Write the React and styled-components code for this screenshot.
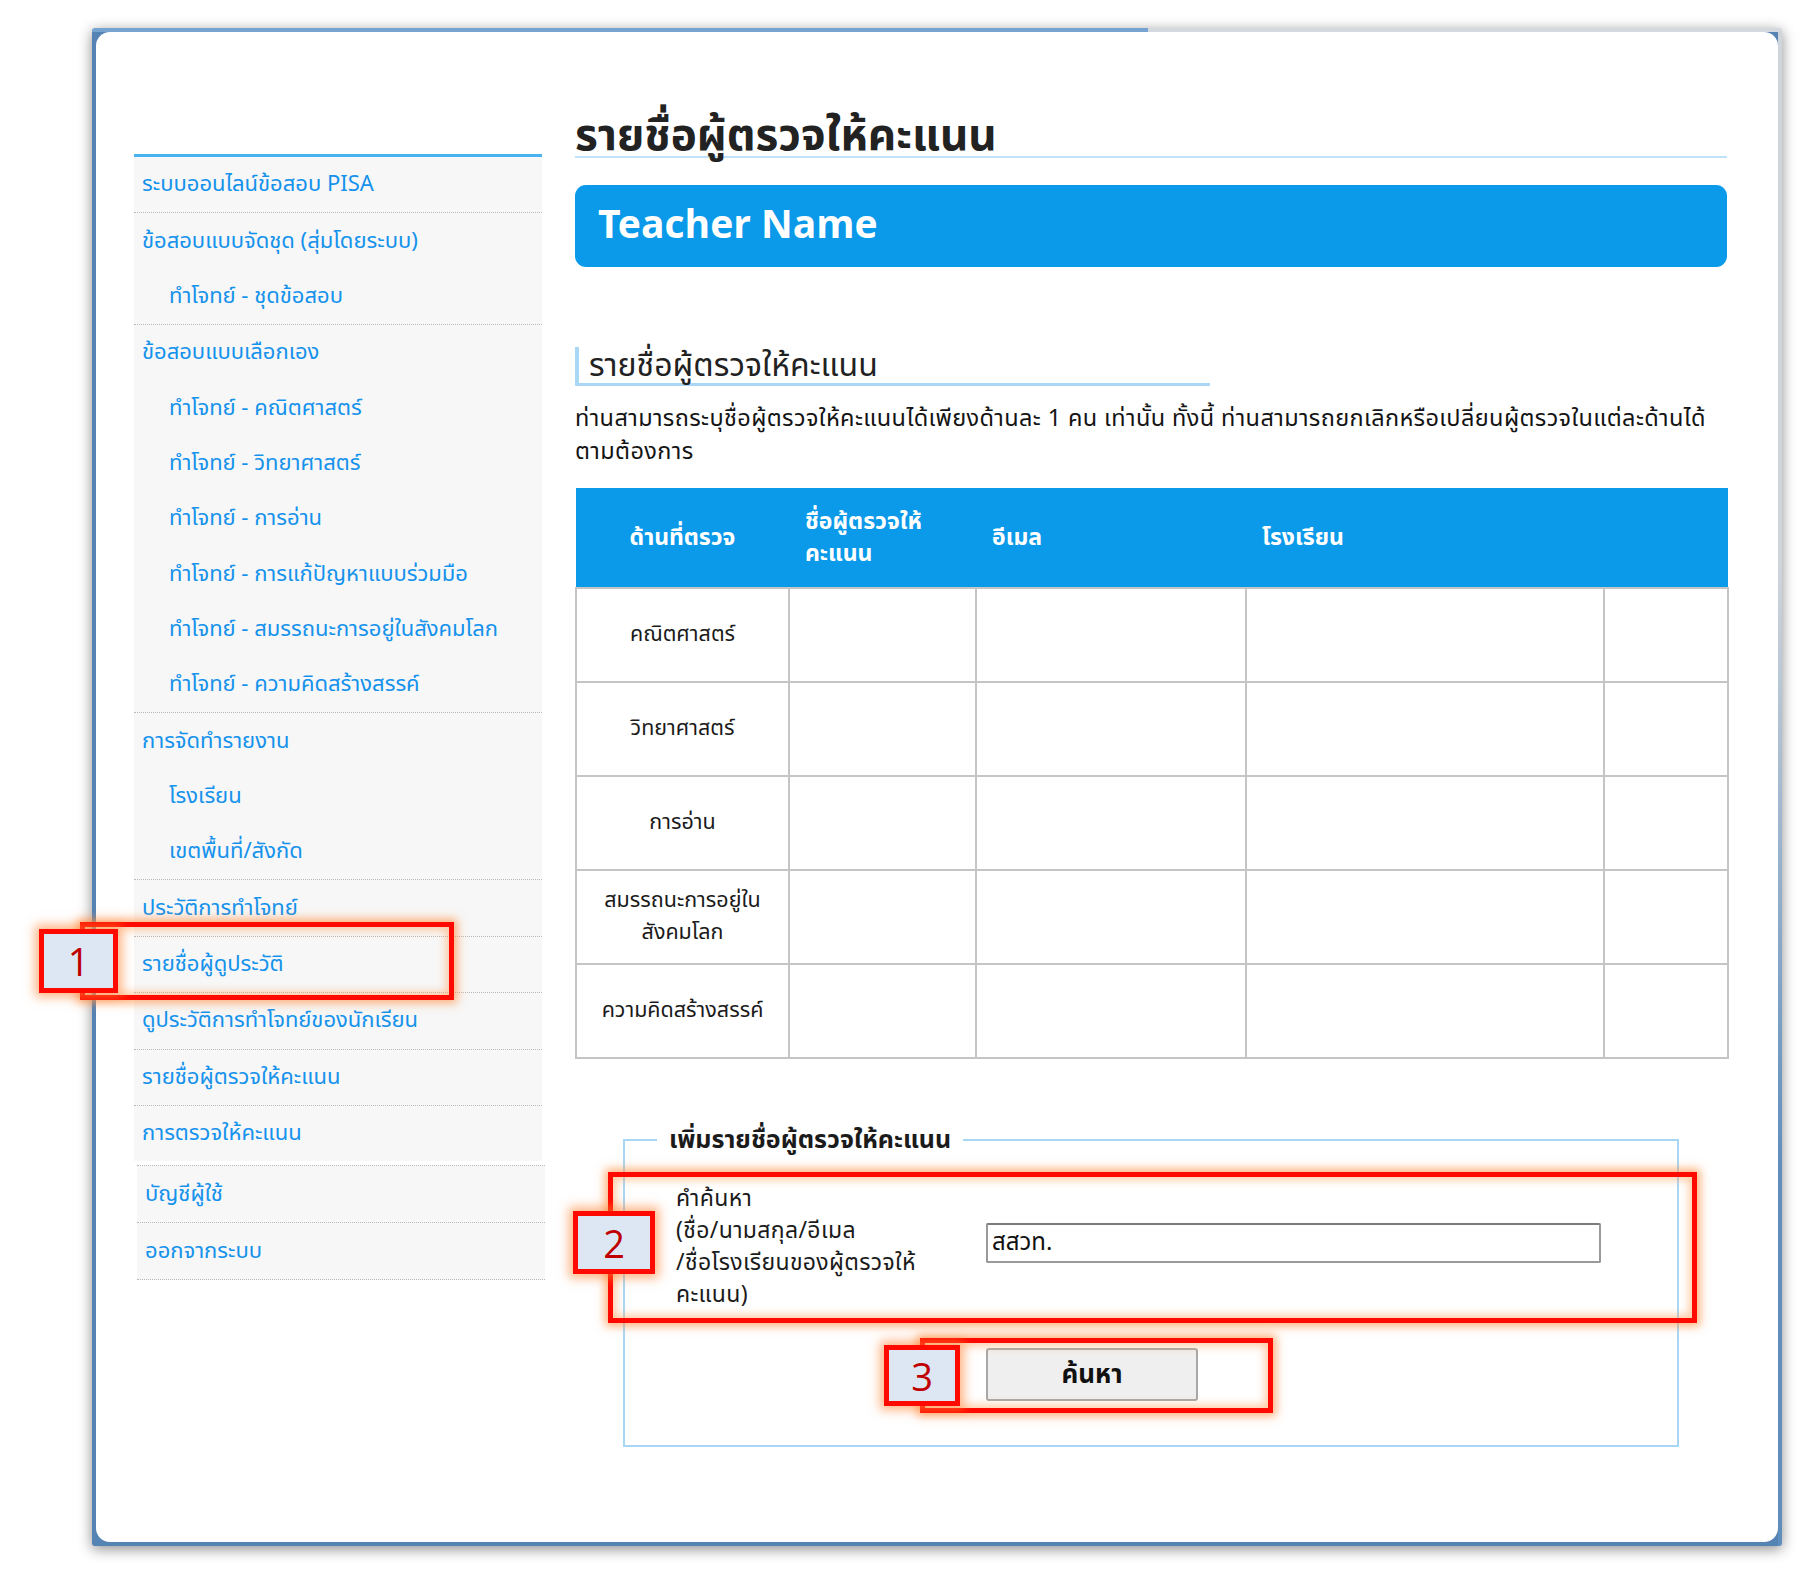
import React from "react";
import styled, { createGlobalStyle } from "styled-components";

const GlobalStyle = createGlobalStyle`
  html, body {
    margin: 0;
    padding: 0;
    background: #ffffff;
  }
  body {
    font-family: Tahoma, "Noto Sans Thai", "Noto Sans", "DejaVu Sans", sans-serif;
    color: #1b1b1b;
  }
`;

const menuGroups = [
  [{ text: "ระบบออนไลน์ข้อสอบ PISA" }],
  [
    { text: "ข้อสอบแบบจัดชุด (สุ่มโดยระบบ)" },
    { text: "ทำโจทย์ - ชุดข้อสอบ", sub: true },
  ],
  [
    { text: "ข้อสอบแบบเลือกเอง" },
    { text: "ทำโจทย์ - คณิตศาสตร์", sub: true },
    { text: "ทำโจทย์ - วิทยาศาสตร์", sub: true },
    { text: "ทำโจทย์ - การอ่าน", sub: true },
    { text: "ทำโจทย์ - การแก้ปัญหาแบบร่วมมือ", sub: true },
    { text: "ทำโจทย์ - สมรรถนะการอยู่ในสังคมโลก", sub: true },
    { text: "ทำโจทย์ - ความคิดสร้างสรรค์", sub: true },
  ],
  [
    { text: "การจัดทำรายงาน" },
    { text: "โรงเรียน", sub: true },
    { text: "เขตพื้นที่/สังกัด", sub: true },
  ],
  [{ text: "ประวัติการทำโจทย์" }],
  [{ text: "รายชื่อผู้ดูประวัติ" }],
  [{ text: "ดูประวัติการทำโจทย์ของนักเรียน" }],
  [{ text: "รายชื่อผู้ตรวจให้คะแนน" }],
  [{ text: "การตรวจให้คะแนน" }],
];

const accountGroups = [[{ text: "บัญชีผู้ใช้" }], [{ text: "ออกจากระบบ" }]];

const subjects = [
  ["คณิตศาสตร์"],
  ["วิทยาศาสตร์"],
  ["การอ่าน"],
  ["สมรรถนะการอยู่ใน", "สังคมโลก"],
  ["ความคิดสร้างสรรค์"],
];

const searchLabel = [
  "คำค้นหา",
  "(ชื่อ/นามสกุล/อีเมล",
  "/ชื่อโรงเรียนของผู้ตรวจให้",
  "คะแนน)",
];

const marks = [
  { n: "1", box: [39, 929, 79, 64], rect: [80, 922, 374, 78] },
  { n: "2", box: [573, 1211, 82, 63], rect: [608, 1172, 1089, 151] },
  { n: "3", box: [884, 1345, 76, 61], rect: [920, 1338, 353, 75] },
];

export default function App() {
  return (
    <Page>
      <GlobalStyle />
      <Frame>
        <Card>
          <Sidebar>
            <Menu>
              {menuGroups.map((group, i) => (
                <Group key={i}>
                  {group.map((item) => (
                    <MenuItem key={item.text} $sub={item.sub}>
                      {item.text}
                    </MenuItem>
                  ))}
                </Group>
              ))}
            </Menu>
            <AccountMenu>
              {accountGroups.map((group, i) => (
                <Group key={i}>
                  {group.map((item) => (
                    <MenuItem key={item.text} $tall>
                      {item.text}
                    </MenuItem>
                  ))}
                </Group>
              ))}
            </AccountMenu>
          </Sidebar>

          <Main>
            <PageTitle>รายชื่อผู้ตรวจให้คะแนน</PageTitle>
            <NameBar>Teacher Name</NameBar>
            <SectionTitle>รายชื่อผู้ตรวจให้คะแนน</SectionTitle>
            <Intro>
              ท่านสามารถระบุชื่อผู้ตรวจให้คะแนนได้เพียงด้านละ 1 คน เท่านั้น
              ทั้งนี้ ท่านสามารถยกเลิกหรือเปลี่ยนผู้ตรวจในแต่ละด้านได้
              <br />
              ตามต้องการ
            </Intro>

            <Table>
              <colgroup>
                <col style={{ width: 213 }} />
                <col style={{ width: 187 }} />
                <col style={{ width: 270 }} />
                <col style={{ width: 358 }} />
                <col style={{ width: 124 }} />
              </colgroup>
              <thead>
                <tr>
                  <Th $center>ด้านที่ตรวจ</Th>
                  <Th>
                    ชื่อผู้ตรวจให้
                    <br />
                    คะแนน
                  </Th>
                  <Th>อีเมล</Th>
                  <Th>โรงเรียน</Th>
                  <Th />
                </tr>
              </thead>
              <tbody>
                {subjects.map((lines) => (
                  <tr key={lines.join("")}>
                    <SubjectCell>
                      {lines.map((l, i) => (
                        <React.Fragment key={l}>
                          {i > 0 && <br />}
                          {l}
                        </React.Fragment>
                      ))}
                    </SubjectCell>
                    <Td />
                    <Td />
                    <Td />
                    <Td />
                  </tr>
                ))}
              </tbody>
            </Table>

            <AddBox>
              <Legend>เพิ่มรายชื่อผู้ตรวจให้คะแนน</Legend>
              <SearchRow>
                <SearchLabel>
                  {searchLabel.map((line) => (
                    <LabelLine key={line}>{line}</LabelLine>
                  ))}
                </SearchLabel>
                <SearchInput defaultValue="สสวท." />
              </SearchRow>
              <ButtonRow>
                <SearchButton type="button">ค้นหา</SearchButton>
              </ButtonRow>
            </AddBox>
          </Main>
        </Card>
      </Frame>

      {marks.map((m) => (
        <React.Fragment key={m.n}>
          <MarkRect
            style={{
              left: m.rect[0],
              top: m.rect[1],
              width: m.rect[2],
              height: m.rect[3],
            }}
          />
          <MarkBadge
            style={{
              left: m.box[0],
              top: m.box[1],
              width: m.box[2],
              height: m.box[3],
            }}
          >
            {m.n}
          </MarkBadge>
        </React.Fragment>
      ))}
    </Page>
  );
}

const Page = styled.div`
  position: relative;
  width: 1810px;
  height: 1576px;
  padding: 28px 0 0 92px;
  box-sizing: border-box;
  overflow: hidden;
`;

const Frame = styled.div`
  width: 1690px;
  height: 1518px;
  box-sizing: border-box;
  padding: 4px;
  border-radius: 3px;
  background:
    linear-gradient(to right, #76a3cf 0 62.5%, #d4d9df 62.5% 100%) top / 100% 4px no-repeat,
    linear-gradient(to bottom, #d0d5db 0 35%, #5f8ebd 75%) right / 4px 100% no-repeat,
    #5583b3;
  box-shadow: 0 3px 14px rgba(0, 0, 0, 0.45);
`;

const Card = styled.div`
  height: 100%;
  box-sizing: border-box;
  background: #ffffff;
  border-radius: 14px;
  display: flex;
  align-items: flex-start;
  gap: 33px;
  padding: 0 51px 0 38px;
`;

const Sidebar = styled.nav`
  width: 408px;
  margin-top: 122px;
  flex-shrink: 0;
`;

const Menu = styled.div`
  background: #f7f7f7;
  border-top: 3px solid #49b3f2;
`;

const AccountMenu = styled.div`
  background: #f7f7f7;
  margin: 4px -3px 0 3px;
  border-top: 1px dotted #b9b9b9;
`;

const Group = styled.div`
  border-bottom: 1px dotted #b9b9b9;
  ${Menu} &:last-child {
    border-bottom: none;
  }
`;

const MenuItem = styled.div`
  height: ${(p) => (p.$tall ? "56px" : "55.35px")};
  display: flex;
  align-items: center;
  padding-left: ${(p) => (p.$sub ? "35px" : "8px")};
  font-size: 22px;
  color: #1592ec;
  white-space: nowrap;
`;

const Main = styled.main`
  width: 1152px;
  flex-shrink: 0;
  padding-top: 68px;
`;

const PageTitle = styled.h1`
  margin: 0;
  font-size: 44px;
  font-weight: bold;
  color: #222222;
  line-height: 56px;
  padding-top: 9px;
  height: 47px;
  overflow: visible;
  border-bottom: 2px solid #bfe2f8;
`;

const NameBar = styled.div`
  margin-top: 27px;
  height: 82px;
  display: flex;
  align-items: center;
  padding-left: 23px;
  background: #0b9aea;
  border-radius: 11px;
  color: #ffffff;
  font-size: 39px;
  font-weight: bold;
`;

const SectionTitle = styled.h2`
  margin: 80px 0 0;
  width: 621px;
  font-size: 32px;
  font-weight: normal;
  color: #222222;
  line-height: 34px;
  padding: 2px 0 0 10px;
  border-left: 4px solid #a9d8f6;
  border-bottom: 3px solid #a9d8f6;
`;

const Intro = styled.p`
  margin: 17px 0 0;
  font-size: 23.5px;
  letter-spacing: 0.38px;
  line-height: 33px;
  color: #141414;
  white-space: nowrap;
`;

const Table = styled.table`
  margin-top: 19px;
  width: 1152px;
  table-layout: fixed;
  border-collapse: collapse;
`;

const Th = styled.th`
  height: 99px;
  padding: 0 0 0 ${(p) => (p.$center ? "0" : "16px")};
  background: #0b9aea;
  color: #ffffff;
  font-size: 23px;
  font-weight: bold;
  line-height: 32px;
  text-align: ${(p) => (p.$center ? "center" : "left")};
  vertical-align: middle;
  white-space: nowrap;
`;

const Td = styled.td`
  height: 92px;
  border: 2px solid #c5c5c5;
  padding: 0;
`;

const SubjectCell = styled(Td)`
  text-align: center;
  font-size: 21.5px;
  line-height: 32px;
  color: #1b1b1b;
  white-space: nowrap;
`;

const AddBox = styled.fieldset`
  margin: 63px 48px 0;
  height: 325px;
  box-sizing: border-box;
  border: 2px solid #a8d7f5;
  padding: 22px 0 0 51px;
`;

const Legend = styled.legend`
  padding: 0 12px;
  margin-left: -19px;
  font-size: 25px;
  line-height: 36px;
  font-weight: bold;
  color: #1b1b1b;
`;

const SearchRow = styled.div`
  display: flex;
  align-items: center;
  margin-top: 3px;
`;

const SearchLabel = styled.div`
  width: 310px;
  flex-shrink: 0;
  font-size: 23px;
  letter-spacing: 0.35px;
  color: #1b1b1b;
  white-space: nowrap;
`;

const LabelLine = styled.div`
  height: 32px;
  line-height: 32px;
`;

const SearchInput = styled.input`
  width: 615px;
  height: 40px;
  margin-bottom: 8px;
  box-sizing: border-box;
  border: 2px solid #9a9a9a;
  border-top-color: #7c7c7c;
  border-radius: 2px;
  padding: 0 4px;
  font-family: inherit;
  font-size: 24px;
  color: #111111;
  background: #ffffff;
  outline: none;
`;

const ButtonRow = styled.div`
  margin-top: 37px;
  padding-left: 310px;
`;

const SearchButton = styled.button`
  width: 212px;
  height: 53px;
  border: 2px solid #a8a8a8;
  border-radius: 3px;
  background: #efefef;
  font-family: inherit;
  font-size: 26px;
  font-weight: bold;
  color: #111111;
`;

const MarkRect = styled.div`
  position: absolute;
  box-sizing: border-box;
  border: 5px solid #ff0a00;
  box-shadow:
    0 0 9px 3px rgba(255, 140, 60, 0.7),
    inset 0 0 9px 3px rgba(255, 160, 90, 0.55);
  pointer-events: none;
`;

const MarkBadge = styled.div`
  position: absolute;
  box-sizing: border-box;
  border: 5px solid #ff0a00;
  background: #dde7f4;
  box-shadow: 0 0 10px 4px rgba(255, 130, 50, 0.6);
  display: flex;
  align-items: center;
  justify-content: center;
  font-family: "Open Sans", "Liberation Sans", sans-serif;
  font-size: 38px;
  color: #c00000;
`;
